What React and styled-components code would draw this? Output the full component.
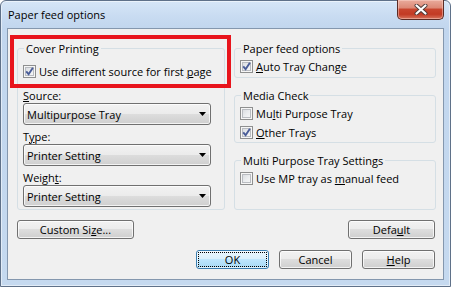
import React from "react";
import styled, { createGlobalStyle, css } from "styled-components";

const GlobalStyle = createGlobalStyle`
  html, body { margin: 0; padding: 0; }
  body {
    background: #ffffff;
    font-family: "Open Sans", "Noto Sans", sans-serif;
    font-size: 11px;
    color: #000;
  }
`;

const Window = styled.div`
  box-sizing: border-box;
  width: 451px;
  height: 287px;
  display: flex;
  flex-direction: column;
  border: 1px solid #5f7189;
  border-radius: 6px 6px 0 0;
  background: linear-gradient(180deg, #d6e6f7 0px, #c8dbf1 16px, #c1d6ee 28px, #c5d9ef 100%);
  box-shadow: inset 0 0 0 1px rgba(255, 255, 255, 0.5);
`;

const TitleBar = styled.div`
  height: 27px;
  flex: none;
  display: flex;
  align-items: flex-start;
  padding-left: 7px;
`;

const Title = styled.div`
  margin-top: 6px;
  line-height: 15px;
`;

const CloseButton = styled.div`
  margin-left: auto;
  margin-right: 6px;
  margin-top: -1px;
  width: 47px;
  height: 20px;
  box-sizing: border-box;
  border: 1px solid #5b2b24;
  border-top: none;
  border-radius: 0 0 5px 5px;
  background: linear-gradient(
    180deg,
    #e9ab9c 0%,
    #dd8a77 40%,
    #c8452e 50%,
    #c23a24 75%,
    #d7735c 100%
  );
  box-shadow: inset 0 0 0 1px rgba(255, 220, 210, 0.45);
  display: flex;
  align-items: center;
  justify-content: center;
`;

const Client = styled.div`
  position: relative;
  flex: 1;
  margin: 0 6px 6px;
  border: 1px solid #8497ae;
  background: #f0f0f0;
  padding: 12px 7px 0 9px;
  display: flex;
  flex-direction: column;
`;

const Panels = styled.div`
  display: grid;
  grid-template-columns: 208px 202px;
  column-gap: 9px;
  height: 169px;
`;

const Column = styled.div`
  display: flex;
  flex-direction: column;
  gap: 10px;
`;

const Group = styled.fieldset`
  margin: 0;
  min-width: 0;
  box-sizing: border-box;
  height: ${(p) => p.$h}px;
  padding: ${(p) => p.$pt}px 6px 0 5px;
  border: 1px solid #d5dfe5;
  border-radius: 3px;
`;

const Legend = styled.legend`
  padding: 0 2px;
  margin-left: 1px;
  line-height: 15px;
`;

const Stack = styled.div`
  display: flex;
  flex-direction: column;
  gap: ${(p) => p.$gap || 0}px;
  margin-top: ${(p) => p.$mt || 0}px;
`;

const CheckRow = styled.label`
  display: flex;
  align-items: center;
  gap: 3px;
  height: 15px;
  line-height: 15px;
  white-space: nowrap;
`;

const Box = styled.span`
  position: relative;
  flex: none;
  width: 13px;
  height: 13px;
  box-sizing: border-box;
  border: 1px solid #8e8f8f;
  background: linear-gradient(135deg, #d3d6db 0%, #eceef0 55%, #fafafa 100%);
  box-shadow: inset 0 0 0 1px #f6f6f6, inset 0 0 0 2px #b9bcc1;
`;

const Tick = styled.svg`
  position: absolute;
  left: -1px;
  top: -1px;
`;

const U = styled.span`
  text-decoration: underline;
  text-underline-offset: 1px;
  text-decoration-thickness: 1px;
`;

const Field = styled.div`
  display: flex;
  flex-direction: column;
`;

const FieldLabel = styled.div`
  line-height: 14px;
  height: 14px;
`;

const Combo = styled.div`
  box-sizing: border-box;
  width: 188px;
  height: 22px;
  border: 1px solid #707070;
  border-radius: 3px;
  background: linear-gradient(180deg, #f2f2f2 0%, #ebebeb 50%, #dddddd 50%, #cfcfcf 100%);
  box-shadow: inset 0 0 0 1px rgba(255, 255, 255, 0.75);
  display: flex;
  align-items: center;
  justify-content: space-between;
  padding: 0 4px 0 3px;
  line-height: 15px;
`;

const ButtonRow = styled.div`
  display: flex;
  justify-content: ${(p) => p.$justify};
  gap: 10px;
  margin-top: ${(p) => p.$mt}px;
  padding-right: 1px;
`;

const Button = styled.button`
  box-sizing: border-box;
  width: ${(p) => p.$w}px;
  height: 19px;
  padding: 0;
  font: inherit;
  color: #000;
  line-height: 15px;
  text-align: center;
  border: 1px solid #707070;
  border-radius: 3px;
  background: linear-gradient(180deg, #f2f2f2 0%, #ebebeb 50%, #dddddd 50%, #cfcfcf 100%);
  box-shadow: inset 0 0 0 1px rgba(255, 255, 255, 0.75);
  ${(p) =>
    p.$primary &&
    css`
      border-color: #3c7fb1;
      background: linear-gradient(180deg, #eaf6fd 0%, #d9f0fc 50%, #bee6fd 50%, #a7d9f5 100%);
      box-shadow: inset 0 0 0 1px rgba(255, 255, 255, 0.6);
      outline: 1px dotted #000;
      outline-offset: -3px;
    `}
`;

const RedMark = styled.div`
  position: absolute;
  left: 2px;
  top: 6px;
  width: 221px;
  height: 53px;
  box-sizing: border-box;
  border: 4px solid #e8141c;
  pointer-events: none;
`;

function Check({ checked, children }) {
  return (
    <CheckRow>
      <Box>
        {checked && (
          <Tick width="13" height="13" viewBox="0 0 13 13">
            <path d="M3.2 6.4 L5.6 9.2 L9.9 2.8" fill="none" stroke="#4a5d98" strokeWidth="1.9" />
          </Tick>
        )}
      </Box>
      <span>{children}</span>
    </CheckRow>
  );
}

function Arrow() {
  return (
    <svg width="7" height="4" viewBox="0 0 7 4">
      <polygon points="0,0 7,0 3.5,4" fill="#000" />
    </svg>
  );
}

function Select({ label, value }) {
  return (
    <Field>
      <FieldLabel>{label}</FieldLabel>
      <Combo>
        <span>{value}</span>
        <Arrow />
      </Combo>
    </Field>
  );
}

export default function App() {
  return (
    <>
      <GlobalStyle />
      <Window>
        <TitleBar>
          <Title>Paper feed options</Title>
          <CloseButton>
            <svg width="14" height="11" viewBox="0 0 14 11">
              <path d="M2.5 1.5 L11.5 9.5 M11.5 1.5 L2.5 9.5" stroke="#4b3a38" strokeWidth="4" strokeLinecap="round" />
              <path d="M2.5 1.5 L11.5 9.5 M11.5 1.5 L2.5 9.5" stroke="#ffffff" strokeWidth="2.2" strokeLinecap="round" />
            </svg>
          </CloseButton>
        </TitleBar>
        <Client>
          <Panels>
            <Group $h={169} $pt={8}>
              <Legend>Cover Printing</Legend>
              <Check checked>
                Use different source for first <U>p</U>age
              </Check>
              <Stack $gap={5} $mt={10}>
                <Select label={<><U>S</U>ource:</>} value="Multipurpose Tray" />
                <Select label={<>T<U>y</U>pe:</>} value="Printer Setting" />
                <Select label={<>Weigh<U>t</U>:</>} value="Printer Setting" />
              </Stack>
            </Group>
            <Column>
              <Group $h={37} $pt={3}>
                <Legend>Paper feed options</Legend>
                <Check checked>
                  <U>A</U>uto Tray Change
                </Check>
              </Group>
              <Group $h={55} $pt={3}>
                <Legend>Media Check</Legend>
                <Stack $gap={4}>
                  <Check>
                    Mu<U>l</U>ti Purpose Tray
                  </Check>
                  <Check checked>
                    <U>O</U>ther Trays
                  </Check>
                </Stack>
              </Group>
              <Group $h={57} $pt={3}>
                <Legend>Multi Purpose Tray Settings</Legend>
                <Check>
                  Use MP tray as <U>m</U>anual feed
                </Check>
              </Group>
            </Column>
          </Panels>
          <ButtonRow $justify="space-between" $mt={10}>
            <Button $w={117}>
              Custom Si<U>z</U>e...
            </Button>
            <Button $w={87}>
              Defa<U>u</U>lt
            </Button>
          </ButtonRow>
          <ButtonRow $justify="flex-end" $mt={11}>
            <Button $w={73} $primary>
              OK
            </Button>
            <Button $w={73}>Cancel</Button>
            <Button $w={73}>
              <U>H</U>elp
            </Button>
          </ButtonRow>
          <RedMark />
        </Client>
      </Window>
    </>
  );
}
